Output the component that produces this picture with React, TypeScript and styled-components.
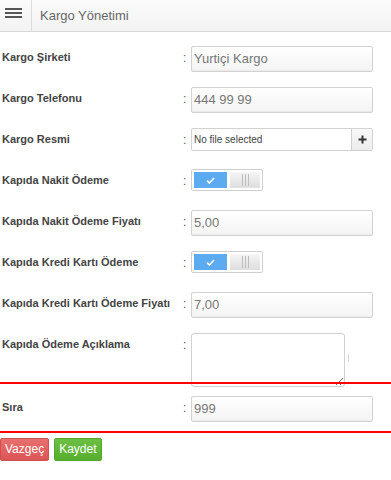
import styled, { createGlobalStyle } from "styled-components";

const GlobalStyle = createGlobalStyle`
  body {
    margin: 0;
    background: #fff;
    font-family: "Liberation Sans", Arial, sans-serif;
  }
`;

const Page = styled.div`
  width: 391px;
  min-height: 480px;
  background: #fff;
`;

const Header = styled.div`
  display: flex;
  height: 31px;
  background: linear-gradient(#fbfbfb, #f3f3f3);
  border-bottom: 1px solid #d8d8d8;
`;

const MenuButton = styled.div`
  width: 32px;
  border-right: 1px solid #dcdcdc;
  display: flex;
  flex-direction: column;
  align-items: flex-start;
  padding: 8px 0 0 5px;
  box-sizing: border-box;
  gap: 2px;
  span {
    display: block;
    width: 17px;
    height: 2px;
    background: #555;
  }
`;

const Title = styled.div`
  display: flex;
  align-items: center;
  padding-left: 8px;
  font-size: 13px;
  color: #666;
`;

const Form = styled.div`
  padding-top: 14px;
`;

const Row = styled.div<{ $h?: number }>`
  display: flex;
  align-items: flex-start;
  height: ${(p) => p.$h ?? 41}px;
  padding-left: 2px;
`;

const HighlightRow = styled(Row)`
  position: relative;
  height: 47px;
  padding-top: 12px;
  box-sizing: content-box;
  height: 35px;
  border-top: 2px solid #f00;
  border-bottom: 2px solid #f00;
  margin-left: 0;
`;

const Label = styled.div`
  width: 181px;
  font-size: 11px;
  font-weight: bold;
  color: #444;
  line-height: 22px;
`;

const Colon = styled.div`
  width: 8px;
  font-size: 12px;
  color: #555;
  line-height: 24px;
`;

const TextInput = styled.div`
  width: 182px;
  height: 26px;
  box-sizing: border-box;
  border: 1px solid #d2d2d2;
  border-radius: 2px;
  background: linear-gradient(#fff, #f4f4f4);
  box-shadow: inset 0 -1px 1px rgba(0, 0, 0, 0.04);
  padding-left: 2px;
  font-size: 13px;
  line-height: 24px;
  color: #777;
`;

const FileInput = styled.div`
  display: flex;
  width: 182px;
  height: 23px;
  box-sizing: border-box;
  border: 1px solid #d2d2d2;
  border-radius: 2px;
  background: #fff;
`;

const FileName = styled.div`
  flex: 1;
  padding-left: 2px;
  font-size: 10px;
  line-height: 21px;
  color: #444;
`;

const FileButton = styled.div`
  width: 20px;
  border-left: 1px solid #d2d2d2;
  background: linear-gradient(#f8f8f8, #ececec);
  display: flex;
  align-items: center;
  justify-content: center;
`;

const Toggle = styled.div`
  display: flex;
  gap: 3px;
  width: 72px;
  height: 22px;
  box-sizing: border-box;
  padding: 2px;
  border: 1px solid #cfcfcf;
  border-radius: 2px;
  background: #fff;
`;

const ToggleOn = styled.div`
  width: 33px;
  height: 16px;
  background: #5caaf0;
  display: flex;
  align-items: center;
  justify-content: center;
`;

const ToggleHandle = styled.div`
  width: 30px;
  height: 16px;
  background: linear-gradient(#f5f5f5, #dedede);
  display: flex;
  align-items: center;
  justify-content: center;
  gap: 2px;
  span {
    display: block;
    width: 1px;
    height: 12px;
    background: #bdbdbd;
  }
`;

const TextArea = styled.textarea`
  width: 154px;
  height: 54px;
  box-sizing: border-box;
  border: 1px solid #d2d2d2;
  border-radius: 3px;
  background: #fff;
  margin: 0;
  font-family: inherit;
`;

const Tick = styled.div`
  width: 1px;
  height: 8px;
  margin: 21px 0 0 3px;
  background: #d8d8d8;
`;

const Actions = styled.div`
  display: flex;
  gap: 5px;
  margin-top: 5px;
`;

const Button = styled.div<{ $color: string; $border: string }>`
  height: 23px;
  box-sizing: border-box;
  padding: 0 4px;
  border: 1px solid ${(p) => p.$border};
  border-radius: 2px;
  background: ${(p) => p.$color};
  color: #fff;
  font-size: 12px;
  line-height: 21px;
`;

const Check = () => (
  <svg width="9" height="7" viewBox="0 0 9 7">
    <path d="M1 3.6 L3.4 6 L8 1" fill="none" stroke="#fff" strokeWidth="1.6" />
  </svg>
);

const Plus = () => (
  <svg width="9" height="9" viewBox="0 0 9 9">
    <path d="M4.5 0.5 V8.5 M0.5 4.5 H8.5" stroke="#333" strokeWidth="2" />
  </svg>
);

const Switch = () => (
  <Toggle>
    <ToggleOn>
      <Check />
    </ToggleOn>
    <ToggleHandle>
      <span />
      <span />
      <span />
    </ToggleHandle>
  </Toggle>
);

const App = () => {
  return (
    <Page>
      <GlobalStyle />
      <Header>
        <MenuButton>
          <span />
          <span />
          <span />
        </MenuButton>
        <Title>Kargo Yönetimi</Title>
      </Header>

      <Form>
        <Row>
          <Label>Kargo Şirketi</Label>
          <Colon>:</Colon>
          <TextInput>Yurtiçi Kargo</TextInput>
        </Row>
        <Row>
          <Label>Kargo Telefonu</Label>
          <Colon>:</Colon>
          <TextInput>444 99 99</TextInput>
        </Row>
        <Row>
          <Label>Kargo Resmi</Label>
          <Colon>:</Colon>
          <FileInput>
            <FileName>No file selected</FileName>
            <FileButton>
              <Plus />
            </FileButton>
          </FileInput>
        </Row>
        <Row>
          <Label>Kapıda Nakit Ödeme</Label>
          <Colon>:</Colon>
          <Switch />
        </Row>
        <Row>
          <Label>Kapıda Nakit Ödeme Fiyatı</Label>
          <Colon>:</Colon>
          <TextInput>5,00</TextInput>
        </Row>
        <Row>
          <Label>Kapıda Kredi Kartı Ödeme</Label>
          <Colon>:</Colon>
          <Switch />
        </Row>
        <Row>
          <Label>Kapıda Kredi Kartı Ödeme Fiyatı</Label>
          <Colon>:</Colon>
          <TextInput>7,00</TextInput>
        </Row>
        <Row $h={49}>
          <Label>Kapıda Ödeme Açıklama</Label>
          <Colon>:</Colon>
          <TextArea />
          <Tick />
        </Row>
        <HighlightRow>
          <Label>Sıra</Label>
          <Colon>:</Colon>
          <TextInput>999</TextInput>
        </HighlightRow>
        <Actions>
          <Button $color="linear-gradient(#e87070, #dc5555)" $border="#d24f4f">
            Vazgeç
          </Button>
          <Button $color="linear-gradient(#6cc043, #58ae2f)" $border="#52a52b">
            Kaydet
          </Button>
        </Actions>
      </Form>
    </Page>
  );
};

export default App;
